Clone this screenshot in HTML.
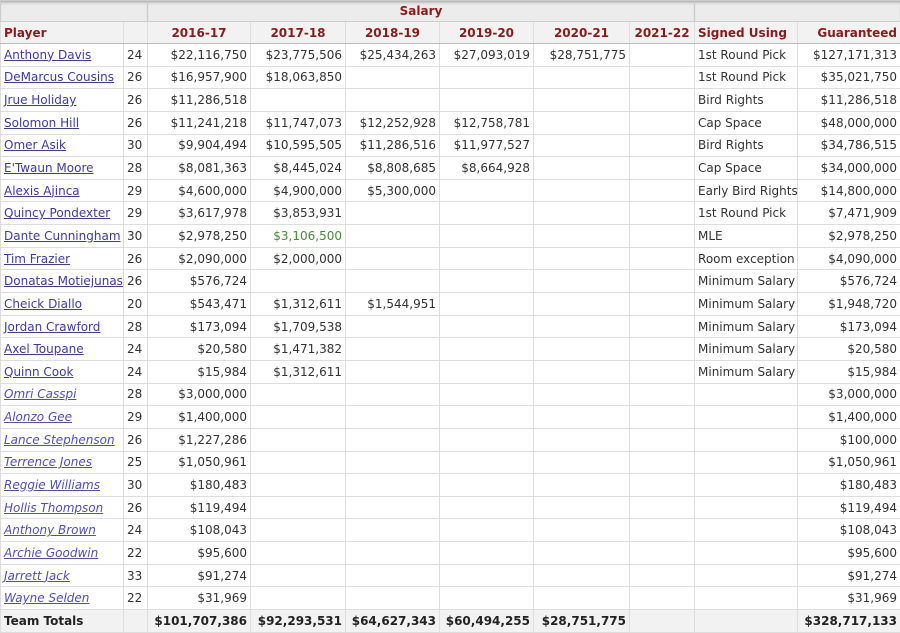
<!DOCTYPE html>
<html><head><meta charset="utf-8"><style>
body{margin:0;width:900px;height:628px;overflow:hidden;background:#fff;font-family:"DejaVu Sans",Verdana,sans-serif;font-size:12px;color:#333}
table{border-collapse:collapse;table-layout:fixed;width:900px}
td,th{padding:0 3px;white-space:nowrap;overflow:hidden;border:1px solid #ddd;line-height:18px;box-sizing:border-box}
th{color:#8b1a1a;font-weight:bold;background:#f2f2f2;text-align:center}
tr.h1 th{background:#ececec;height:21px;border-color:#ccc;box-shadow:inset 0 3px 3px -2px #999}
tr.h2 th{height:22px;border-top:1px solid #bbb;border-bottom:1px solid #bbb}
td{height:22.65px}
td.n{text-align:right}
a{color:#3c3ca0;text-decoration:underline}
i a{color:#5050b0}
.g{color:#4a8a3c}
tr.t td{font-weight:bold;background:#f2f2f2;color:#222;border-top:1px solid #bbb}
th.l,td.l{text-align:left}
th.r{text-align:right}
</style></head><body>
<table>
<colgroup><col style="width:123px"><col style="width:24px"><col style="width:103px"><col style="width:95px"><col style="width:94px"><col style="width:94px"><col style="width:96px"><col style="width:65px"><col style="width:103px"><col style="width:103px"></colgroup>
<tr class="h1"><th colspan="2"></th><th colspan="6">Salary</th><th colspan="2"></th></tr>
<tr class="h2"><th class="l">Player</th><th></th><th>2016-17</th><th>2017-18</th><th>2018-19</th><th>2019-20</th><th>2020-21</th><th>2021-22</th><th class="l">Signed Using</th><th class="r">Guaranteed</th></tr>
<tr><td><a>Anthony Davis</a></td><td>24</td><td class="n">$22,116,750</td><td class="n">$23,775,506</td><td class="n">$25,434,263</td><td class="n">$27,093,019</td><td class="n">$28,751,775</td><td></td><td>1st Round Pick</td><td class="n">$127,171,313</td></tr>
<tr><td><a>DeMarcus Cousins</a></td><td>26</td><td class="n">$16,957,900</td><td class="n">$18,063,850</td><td></td><td></td><td></td><td></td><td>1st Round Pick</td><td class="n">$35,021,750</td></tr>
<tr><td><a>Jrue Holiday</a></td><td>26</td><td class="n">$11,286,518</td><td></td><td></td><td></td><td></td><td></td><td>Bird Rights</td><td class="n">$11,286,518</td></tr>
<tr><td><a>Solomon Hill</a></td><td>26</td><td class="n">$11,241,218</td><td class="n">$11,747,073</td><td class="n">$12,252,928</td><td class="n">$12,758,781</td><td></td><td></td><td>Cap Space</td><td class="n">$48,000,000</td></tr>
<tr><td><a>Omer Asik</a></td><td>30</td><td class="n">$9,904,494</td><td class="n">$10,595,505</td><td class="n">$11,286,516</td><td class="n">$11,977,527</td><td></td><td></td><td>Bird Rights</td><td class="n">$34,786,515</td></tr>
<tr><td><a>E'Twaun Moore</a></td><td>28</td><td class="n">$8,081,363</td><td class="n">$8,445,024</td><td class="n">$8,808,685</td><td class="n">$8,664,928</td><td></td><td></td><td>Cap Space</td><td class="n">$34,000,000</td></tr>
<tr><td><a>Alexis Ajinca</a></td><td>29</td><td class="n">$4,600,000</td><td class="n">$4,900,000</td><td class="n">$5,300,000</td><td></td><td></td><td></td><td>Early Bird Rights</td><td class="n">$14,800,000</td></tr>
<tr><td><a>Quincy Pondexter</a></td><td>29</td><td class="n">$3,617,978</td><td class="n">$3,853,931</td><td></td><td></td><td></td><td></td><td>1st Round Pick</td><td class="n">$7,471,909</td></tr>
<tr><td><a>Dante Cunningham</a></td><td>30</td><td class="n">$2,978,250</td><td class="n g">$3,106,500</td><td></td><td></td><td></td><td></td><td>MLE</td><td class="n">$2,978,250</td></tr>
<tr><td><a>Tim Frazier</a></td><td>26</td><td class="n">$2,090,000</td><td class="n">$2,000,000</td><td></td><td></td><td></td><td></td><td>Room exception</td><td class="n">$4,090,000</td></tr>
<tr><td><a>Donatas Motiejunas</a></td><td>26</td><td class="n">$576,724</td><td></td><td></td><td></td><td></td><td></td><td>Minimum Salary</td><td class="n">$576,724</td></tr>
<tr><td><a>Cheick Diallo</a></td><td>20</td><td class="n">$543,471</td><td class="n">$1,312,611</td><td class="n">$1,544,951</td><td></td><td></td><td></td><td>Minimum Salary</td><td class="n">$1,948,720</td></tr>
<tr><td><a>Jordan Crawford</a></td><td>28</td><td class="n">$173,094</td><td class="n">$1,709,538</td><td></td><td></td><td></td><td></td><td>Minimum Salary</td><td class="n">$173,094</td></tr>
<tr><td><a>Axel Toupane</a></td><td>24</td><td class="n">$20,580</td><td class="n">$1,471,382</td><td></td><td></td><td></td><td></td><td>Minimum Salary</td><td class="n">$20,580</td></tr>
<tr><td><a>Quinn Cook</a></td><td>24</td><td class="n">$15,984</td><td class="n">$1,312,611</td><td></td><td></td><td></td><td></td><td>Minimum Salary</td><td class="n">$15,984</td></tr>
<tr><td><i><a>Omri Casspi</a></i></td><td>28</td><td class="n">$3,000,000</td><td></td><td></td><td></td><td></td><td></td><td></td><td class="n">$3,000,000</td></tr>
<tr><td><i><a>Alonzo Gee</a></i></td><td>29</td><td class="n">$1,400,000</td><td></td><td></td><td></td><td></td><td></td><td></td><td class="n">$1,400,000</td></tr>
<tr><td><i><a>Lance Stephenson</a></i></td><td>26</td><td class="n">$1,227,286</td><td></td><td></td><td></td><td></td><td></td><td></td><td class="n">$100,000</td></tr>
<tr><td><i><a>Terrence Jones</a></i></td><td>25</td><td class="n">$1,050,961</td><td></td><td></td><td></td><td></td><td></td><td></td><td class="n">$1,050,961</td></tr>
<tr><td><i><a>Reggie Williams</a></i></td><td>30</td><td class="n">$180,483</td><td></td><td></td><td></td><td></td><td></td><td></td><td class="n">$180,483</td></tr>
<tr><td><i><a>Hollis Thompson</a></i></td><td>26</td><td class="n">$119,494</td><td></td><td></td><td></td><td></td><td></td><td></td><td class="n">$119,494</td></tr>
<tr><td><i><a>Anthony Brown</a></i></td><td>24</td><td class="n">$108,043</td><td></td><td></td><td></td><td></td><td></td><td></td><td class="n">$108,043</td></tr>
<tr><td><i><a>Archie Goodwin</a></i></td><td>22</td><td class="n">$95,600</td><td></td><td></td><td></td><td></td><td></td><td></td><td class="n">$95,600</td></tr>
<tr><td><i><a>Jarrett Jack</a></i></td><td>33</td><td class="n">$91,274</td><td></td><td></td><td></td><td></td><td></td><td></td><td class="n">$91,274</td></tr>
<tr><td><i><a>Wayne Selden</a></i></td><td>22</td><td class="n">$31,969</td><td></td><td></td><td></td><td></td><td></td><td></td><td class="n">$31,969</td></tr>
<tr class="t"><td>Team Totals</td><td></td><td class="n">$101,707,386</td><td class="n">$92,293,531</td><td class="n">$64,627,343</td><td class="n">$60,494,255</td><td class="n">$28,751,775</td><td></td><td></td><td class="n">$328,717,133</td></tr>
</table>
</body></html>
